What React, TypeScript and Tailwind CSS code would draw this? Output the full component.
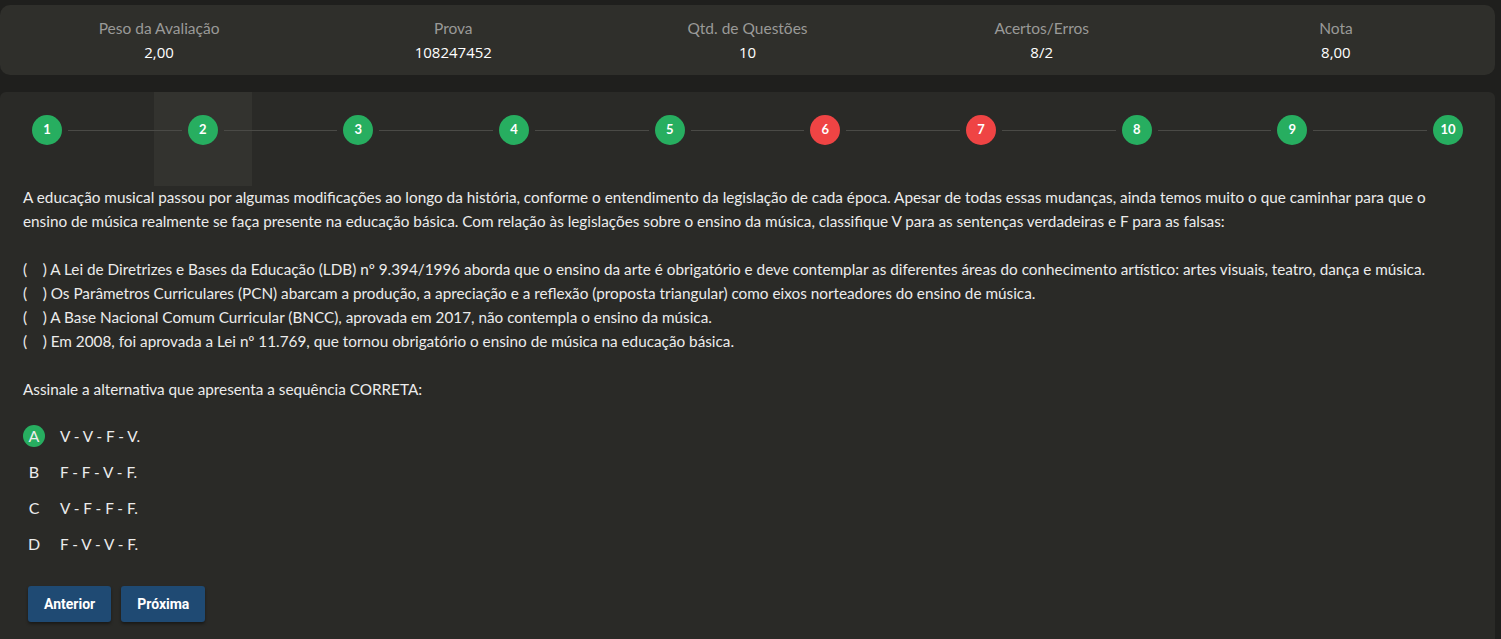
import React from "react";

const stats = [
  { label: "Peso da Avaliação", value: "2,00" },
  { label: "Prova", value: "108247452" },
  { label: "Qtd. de Questões", value: "10" },
  { label: "Acertos/Erros", value: "8/2" },
  { label: "Nota", value: "8,00" },
];

const steps = [
  { n: 1, ok: true },
  { n: 2, ok: true },
  { n: 3, ok: true },
  { n: 4, ok: true },
  { n: 5, ok: true },
  { n: 6, ok: false },
  { n: 7, ok: false },
  { n: 8, ok: true },
  { n: 9, ok: true },
  { n: 10, ok: true },
];

const sentences = [
  "A Lei de Diretrizes e Bases da Educação (LDB) nº 9.394/1996 aborda que o ensino da arte é obrigatório e deve contemplar as diferentes áreas do conhecimento artístico: artes visuais, teatro, dança e música.",
  "Os Parâmetros Curriculares (PCN) abarcam a produção, a apreciação e a reflexão (proposta triangular) como eixos norteadores do ensino de música.",
  "A Base Nacional Comum Curricular (BNCC), aprovada em 2017, não contempla o ensino da música.",
  "Em 2008, foi aprovada a Lei nº 11.769, que tornou obrigatório o ensino de música na educação básica.",
];

const options = [
  { letter: "A", text: "V - V - F - V.", chosen: true },
  { letter: "B", text: "F - F - V - F.", chosen: false },
  { letter: "C", text: "V - F - F - F.", chosen: false },
  { letter: "D", text: "F - V - V - F.", chosen: false },
];

const current = 2;

export default function App() {
  return (
    <div className="min-h-[639px] bg-[#1f1f1d] pt-[5px] pr-[6px] font-['Lato',sans-serif] text-[15.3px] text-[#ececec]">
      {/* Resumo */}
      <div className="grid grid-cols-5 rounded-[10px] bg-[#2f2f2b] px-[12px] pt-[12px] pb-[12px]">
        {stats.map((s) => (
          <div key={s.label} className="flex flex-col items-center">
            <span className="text-[15.5px] leading-[22px] text-[#9a9a98]">{s.label}</span>
            <span className="mt-[2px] font-['Open_Sans',sans-serif] text-[15px] leading-[22px] text-white">
              {s.value}
            </span>
          </div>
        ))}
      </div>

      {/* Questão */}
      <div className="isolate mt-[17px] rounded-t-[6px] bg-[#2a2a27] pb-[17px]">
        <div className="flex items-center px-[32px] pt-[23px] pb-[40px]">
          {steps.map((s, i) => (
            <React.Fragment key={s.n}>
              {i > 0 && <div className="mx-[6px] h-px flex-1 bg-[#4a4a46]" />}
              <div className="relative">
                {s.n === current && (
                  <span className="absolute -left-[34px] -top-[23px] -z-10 h-[94px] w-[98px] bg-[#33332f]" />
                )}
                <div
                  className={`flex h-[30px] w-[30px] items-center justify-center rounded-full text-[13px] font-bold text-white ${
                    s.ok ? "bg-[#27ae60]" : "bg-[#ef4444]"
                  }`}
                >
                  {s.n}
                </div>
              </div>
            </React.Fragment>
          ))}
        </div>

        <div className="pl-[23px] pr-[50px] leading-[24px]">
          <p>
            A educação musical passou por algumas modificações ao longo da história, conforme o entendimento da
            legislação de cada época. Apesar de todas essas mudanças, ainda temos muito o que caminhar para que o ensino
            de música realmente se faça presente na educação básica. Com relação às legislações sobre o ensino da
            música, classifique V para as sentenças verdadeiras e F para as falsas:
          </p>
          <div className="mt-[24px]">
            {sentences.map((t) => (
              <p key={t}>
                <span className="whitespace-pre">(    ) </span>
                {t}
              </p>
            ))}
          </div>
          <p className="mt-[24px]">Assinale a alternativa que apresenta a sequência CORRETA:</p>

          <div className="mt-[24px] flex flex-col gap-[14px]">
            {options.map((o) => (
              <div key={o.letter} className="flex h-[22px] items-center">
                <span
                  className={`flex h-[22px] w-[22px] items-center justify-center rounded-full text-[16px] ${
                    o.chosen ? "bg-[#27ae60]" : ""
                  }`}
                >
                  {o.letter}
                </span>
                <span className="ml-[15px]">{o.text}</span>
              </div>
            ))}
          </div>

          <div className="mt-[31px] flex gap-[10px] pl-[5px]">
            <button className="h-[36px] rounded-[3px] bg-[#1f4a73] px-[16px] font-['Roboto',sans-serif] text-[14px] font-bold text-white shadow-[0_2px_3px_rgba(0,0,0,0.4)]">
              Anterior
            </button>
            <button className="h-[36px] rounded-[3px] bg-[#1f4a73] px-[16px] font-['Roboto',sans-serif] text-[14px] font-bold text-white shadow-[0_2px_3px_rgba(0,0,0,0.4)]">
              Próxima
            </button>
          </div>
        </div>
      </div>
    </div>
  );
}
